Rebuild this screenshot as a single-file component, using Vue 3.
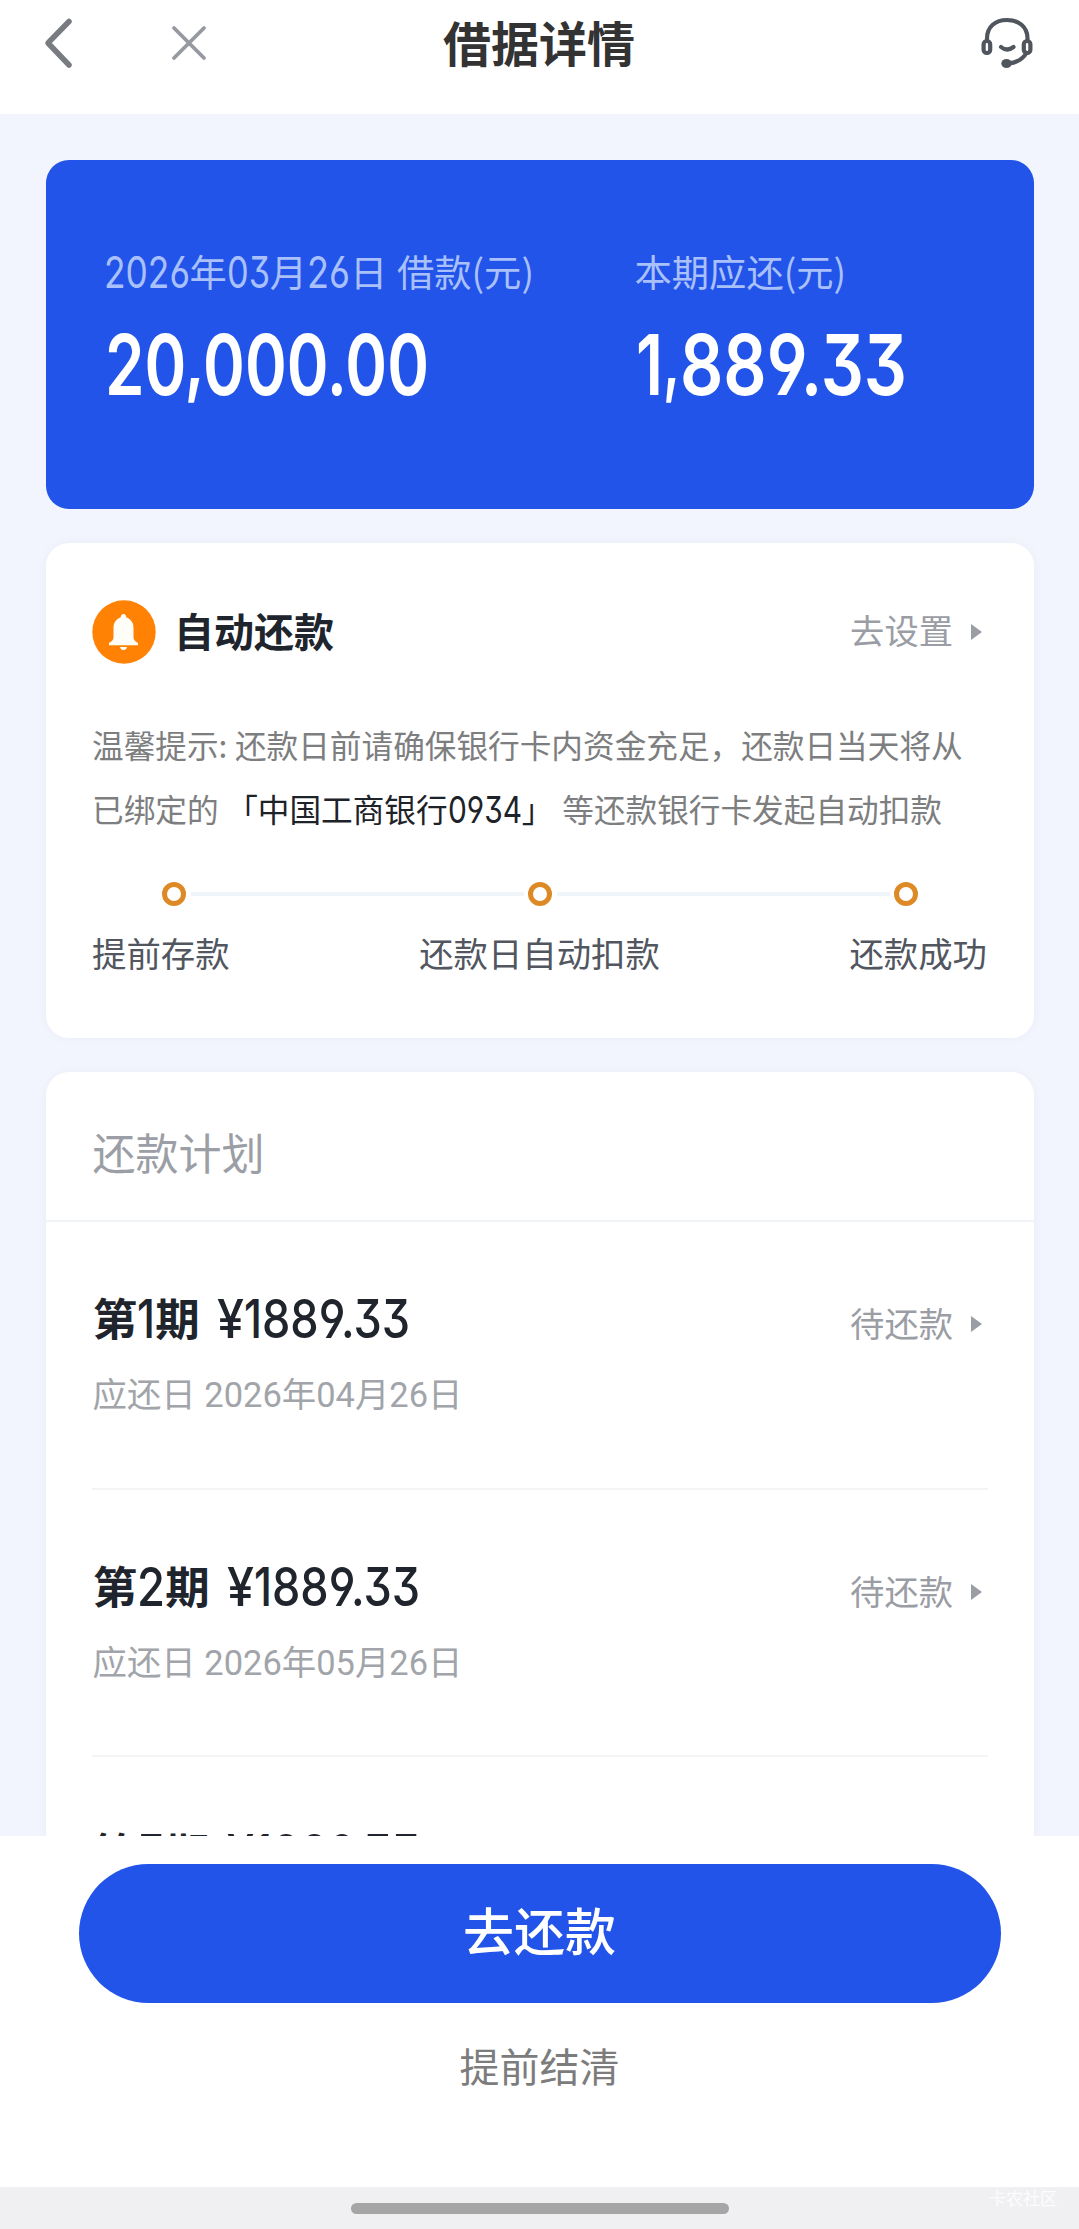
<script setup>
import { h } from 'vue'

// Condensed numerals: the run is fitted to width `w`, with digits `cap` px tall
// that stand on the surrounding text's baseline. Commas are lifted so that
// their tails stay close to the baseline.
const Num = ({ v, w, cap }) => {
  const lift = cap * 0.13
  const dy = v.includes(',')
    ? [...v].map((c, i) => (c === ',' ? -lift : v[i - 1] === ',' ? lift : 0)).join(' ')
    : undefined
  return h('svg', { class: 'num', width: w, height: cap }, [
    h('text', { x: 0, y: cap, dy, 'font-size': cap / 0.727, textLength: w, lengthAdjust: 'spacingAndGlyphs', fill: 'currentColor' }, v)
  ])
}
Num.props = ['v', 'w', 'cap']

const steps = ['提前存款', '还款日自动扣款', '还款成功']
const plans = [
  { no: '1', noW: 18, due: '2026年04月26日' },
  { no: '2', noW: 28, due: '2026年05月26日' },
  { no: '3', noW: 28, due: '2026年06月26日' }
]
</script>

<template>
  <div class="page">
    <header class="bar">
      <svg class="back" width="34" height="56" viewBox="0 0 34 56"><path d="M27 6.500 6 28 27 50" /></svg>
      <svg class="close" width="40" height="40" viewBox="0 0 40 40"><path d="M5 5 35 35M35 5 5 35" /></svg>
      <h1>借据详情</h1>
      <svg class="service" width="54" height="54" viewBox="0 0 54 54">
        <path d="M7 24V22.500C7 10.500 15.500 4 27 4S47.500 10.500 47.500 22.500V24" />
        <rect x="3.600" y="25" width="6.600" height="12" rx="3.300" />
        <rect x="43.800" y="25" width="6.600" height="12" rx="3.300" />
        <path d="M21 31Q27 36 33.500 31M46.500 37Q41 46 29 47.500" />
        <ellipse class="mic" cx="26.500" cy="47.500" rx="5.200" ry="4.500" />
      </svg>
    </header>

    <main class="content">
      <section class="summary">
        <div class="sum first">
          <p class="label"><Num v="2026" :w="86" :cap="31.5" />年<Num v="03" :w="43" :cap="31.5" />月<Num v="26" :w="43" :cap="31.5" />日<i class="sp"></i>借款(元)</p>
          <p class="money"><Num v="20,000.00" :w="324" :cap="61" /></p>
        </div>
        <div class="sum">
          <p class="label">本期应还(元)</p>
          <p class="money"><Num v="1" :w="27" :cap="61" /><Num v="," :w="17" :cap="61" /><Num v="889.33" :w="227" :cap="61" /></p>
        </div>
      </section>

      <section class="card auto">
        <div class="auto-head">
          <svg class="bell" width="64" height="64" viewBox="0 0 64 64">
            <circle cx="32" cy="32" r="31.700" fill="#ff8205" />
            <path d="M31.500 14C33.200 14 34 15.500 34.500 17.500C39.500 19.500 41.500 23 41.500 28V37C41.500 40 43 41 46 43V45.200H17V43C20 41 21.500 40 21.500 37V28C21.500 23 23.500 19.500 28.500 17.500C29 15.500 29.800 14 31.500 14ZM28 47H35Q34.500 50 31.500 50T28 47Z" fill="#fffdf8" />
          </svg>
          <h2>自动还款</h2>
          <span class="link">去设置<i class="tri"></i></span>
        </div>
        <p class="tip">温馨提示:<i class="sp"></i>还款日前请确保银行卡内资金充足，还款日当天将从<br>已绑定的<i class="sp"></i><b>「中国工商银行<Num v="0934" :w="74" :cap="27" />」</b><i class="sp wide"></i>等还款银行卡发起自动扣款</p>
        <div class="track">
          <i class="dot"></i><i class="seg"></i><i class="dot"></i><i class="seg"></i><i class="dot"></i>
        </div>
        <div class="steps"><span v-for="s in steps" :key="s">{{ s }}</span></div>
      </section>

      <section class="card plan">
        <h3>还款计划</h3>
        <article v-for="p in plans" :key="p.no">
          <div>
            <p class="term">第<Num :v="p.no" :w="p.noW" :cap="38.5" />期<span class="amt"><Num v="¥" :w="27" :cap="38.5" /><Num v="1" :w="18" :cap="38.5" /><Num v="889.33" :w="148" :cap="38.5" /></span></p>
            <p class="due">应还日 {{ p.due }}</p>
          </div>
          <span class="link">待还款<i class="tri"></i></span>
        </article>
      </section>
    </main>

    <footer>
      <button class="pay">去还款</button>
      <a class="settle">提前结清</a>
    </footer>
    <div class="home"><i></i><span>卡农社区</span></div>
  </div>
</template>

<style>
html, body { margin: 0; overflow: hidden; }
.num { overflow: visible; }
.num text { font-family: Inter, Roboto, sans-serif; font-feature-settings: "cv03", "cv04", "cv09"; }
</style>

<style scoped>
* { box-sizing: border-box; }
h1, h2, h3, p { margin: 0; }
.page { width: 1079px; height: 2229px; display: flex; flex-direction: column; background: #f2f5fd; font-family: "Noto Sans CJK SC", sans-serif; white-space: nowrap; overflow: hidden; }
.sp { display: inline-block; width: 7.6px; }
.sp.wide { width: 9px; }

.bar { height: 114px; flex: none; background: #fff; display: grid; grid-template-columns: 34px 1fr auto 1fr 54px; align-items: start; padding: 0 45px 0 42px; }
.bar svg { fill: none; stroke-linecap: round; stroke-linejoin: round; }
.back { margin-top: 15px; stroke: #787b80; stroke-width: 5.500; }
.close { margin: 23px 0 0 93px; stroke: #9699a0; stroke-width: 3.800; }
.bar .service { grid-column: 5; margin-top: 16px; stroke: #50555e; stroke-width: 4.200; }
.bar .mic { fill: #50555e; stroke: none; }
h1 { position: relative; left: 11px; font-size: 48px; font-weight: 600; line-height: 82px; color: #333; }

.content { height: 1722px; flex: none; padding: 46px 45px 0 46px; display: flex; flex-direction: column; gap: 33.500px; overflow: hidden; }
.summary { height: 349px; flex: none; border-radius: 23px; background: #2254e9; color: #fff; display: flex; padding: 81px 0 0 57.500px; }
.first { width: 531px; }
.first .sp { width: 9.500px; }
.label { font-size: 37.300px; line-height: 60px; color: #a9c0fa; }
.money { height: 94px; font-weight: 600; display: flex; align-items: flex-end; padding-left: 1px; }

.card { flex: none; background: #fff; border-radius: 23px; box-shadow: 0 0 12px rgba(40, 60, 140, .035); }
.auto { height: 495.500px; padding: 57px 47px 0 46px; }
.auto-head { height: 64px; display: flex; align-items: center; }
h2 { flex: 1; margin: -4px 0 0 18px; font-size: 40px; line-height: 60px; font-weight: 700; color: #20252d; }
.link { display: flex; align-items: center; font-size: 34.300px; line-height: 50px; color: #9a9da4; }
.auto-head .link { margin-top: -5px; }
.tri { width: 0; height: 0; border: 8px solid transparent; border-left: 11px solid #9a9da4; border-right: 0; margin: 5px 5px 0 18px; }
.tip { margin-top: 49.500px; font-size: 31.650px; line-height: 63.500px; color: #7d7e80; }
.tip b { font-weight: 400; color: #1e2229; }
.tip svg { vertical-align: -1px; }
.track { display: flex; align-items: center; justify-content: space-between; height: 24px; margin: 41.500px 69px 0 70px; }
.dot { width: 24px; height: 24px; border: 5.500px solid #dd8a26; border-radius: 50%; }
.seg { width: 333px; height: 4px; background: #f0f5fa; }
.steps { display: flex; justify-content: space-between; margin-top: 21px; font-size: 34.400px; line-height: 50px; color: #51565f; }

.plan { height: 1000px; }
h3 { height: 150px; padding-left: 46.500px; font-size: 43px; line-height: 158px; font-weight: 400; color: #9b9ea5; border-bottom: 2px solid #f1f4f6; }
article { height: 267.300px; margin: 0 46px; padding-top: 65px; display: flex; justify-content: space-between; border-bottom: 2px solid #f2f4f6; }
article:first-of-type { height: 268.300px; }
.term { padding-left: .7px; font-size: 44.500px; line-height: 60px; font-weight: 700; color: #20252d; }
.term svg { font-weight: 500; vertical-align: -1.500px; }
.amt { margin-left: 17.500px; }
.due { margin-top: 23px; padding-left: .5px; font: 34.450px/50px Roboto, "Noto Sans CJK SC", sans-serif; color: #a1a4a9; }
article .link { height: 50px; margin: 10px 1px 0 0; }

footer { height: 351px; flex: none; background: #fff; display: flex; flex-direction: column; align-items: center; padding-top: 28px; }
.pay { width: 922px; height: 139px; border: 0; border-radius: 70px; background: #2254e9; color: #fff; font: 500 51px/130px "Noto Sans CJK SC", sans-serif; padding: 0 0 13px; }
.settle { margin-top: 32px; font-size: 40px; line-height: 60px; color: #7c7c7c; }
.home { flex: 1; background: #f0f0f2; display: flex; justify-content: center; position: relative; }
.home i { width: 378px; height: 11px; margin-top: 16px; border-radius: 6px; background: #a6a6a6; }
.home span { position: absolute; right: 22px; top: 0; font-size: 17px; line-height: 22px; color: #fcfcfc; }
</style>
